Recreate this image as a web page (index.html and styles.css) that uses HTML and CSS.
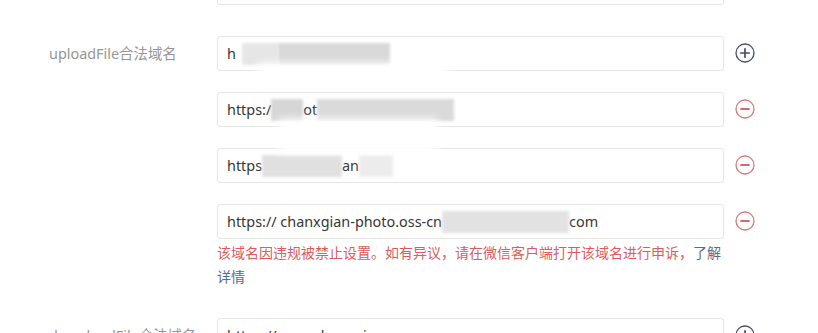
FILE: index.html
```html
<!DOCTYPE html>
<html lang="zh-CN">
<head>
<meta charset="utf-8">
<title>服务器域名</title>
<link rel="stylesheet" href="styles.css">
</head>
<body>
<div class="form">
  <div class="field field-top">
    <div class="label"></div>
    <div class="entries">
      <div class="entry"><div class="box"></div><span class="icon-gap"></span></div>
    </div>
  </div>

  <div class="field field-upload">
    <div class="label">uploadFile合法域名</div>
    <div class="entries">
      <div class="entry">
        <div class="box"><span>h</span><span class="blob b1a"></span><span class="blob b1b"></span><span class="smudge s1"></span></div>
        <svg class="icon" viewBox="0 0 20 20"><circle cx="10" cy="10" r="9" fill="none" stroke="#474d6c" stroke-width="1.3"/><path d="M10 5.8v8.4M5.8 10h8.4" stroke="#474d6c" stroke-width="1.7" stroke-linecap="round"/></svg>
      </div>
      <div class="entry">
        <div class="box"><span>https:/</span><span class="blob b2a"></span><span>ot</span><span class="blob b2b"></span></div>
        <svg class="icon" viewBox="0 0 20 20"><circle cx="10" cy="10" r="9" fill="none" stroke="#d77a7d" stroke-width="1.3"/><path d="M6.2 10h7.6" stroke="#d2666a" stroke-width="2.2" stroke-linecap="round"/></svg>
      </div>
      <div class="entry">
        <div class="box"><span>https</span><span class="blob b3a"></span><span>an</span><span class="blob b3b"></span><span class="smudge s3"></span></div>
        <svg class="icon" viewBox="0 0 20 20"><circle cx="10" cy="10" r="9" fill="none" stroke="#d77a7d" stroke-width="1.3"/><path d="M6.2 10h7.6" stroke="#d2666a" stroke-width="2.2" stroke-linecap="round"/></svg>
      </div>
      <div class="entry-group">
        <div class="entry">
          <div class="box"><span>https:// chanxgian-photo.oss-cn</span><span class="blob b4a"></span><span>com</span></div>
          <svg class="icon" viewBox="0 0 20 20"><circle cx="10" cy="10" r="9" fill="none" stroke="#d77a7d" stroke-width="1.3"/><path d="M6.2 10h7.6" stroke="#d2666a" stroke-width="2.2" stroke-linecap="round"/></svg>
        </div>
        <p class="error">该域名因违规被禁止设置。如有异议，请在微信客户端打开该域名进行申诉，<a class="link">了解详情</a></p>
      </div>
    </div>
  </div>

  <div class="field field-download">
    <div class="label">downloadFile合法域名</div>
    <div class="entries">
      <div class="entry">
        <div class="box"><span>https://www.chanxgian.cn</span></div>
        <svg class="icon" viewBox="0 0 20 20"><circle cx="10" cy="10" r="9" fill="none" stroke="#474d6c" stroke-width="1.3"/><path d="M10 5.8v8.4M5.8 10h8.4" stroke="#474d6c" stroke-width="1.7" stroke-linecap="round"/></svg>
      </div>
    </div>
  </div>
</div>
</body>
</html>
```

FILE: styles.css
```css
html, body {
  margin: 0;
  background: #ffffff;
  overflow: hidden;
}
body {
  font-family: "Noto Sans", "Noto Sans CJK SC", sans-serif;
  font-size: 14.4px;
  color: #353535;
}
.form {
  padding-left: 49px;
}
.field {
  display: flex;
  align-items: flex-start;
}
.label {
  width: 168px;
  flex: none;
  line-height: 35px;
  color: #969696;
  white-space: nowrap;
}
.entries {
  display: flex;
  flex-direction: column;
  gap: 21px;
}
.entry {
  display: flex;
  align-items: center;
}
.box {
  position: relative;
  width: 507px;
  height: 35px;
  box-sizing: border-box;
  border: 1px solid #e6e6e6;
  border-radius: 3px;
  padding-left: 9px;
  display: flex;
  align-items: center;
  white-space: nowrap;
  overflow: visible;
  color: #363636;
}
.icon, .icon-gap {
  width: 20px;
  height: 20px;
  margin-left: 11px;
  margin-top: -2px;
  flex: none;
}
.field-top {
  margin-top: -30px;
}
.field-upload {
  margin-top: 31px;
}
.field-download {
  margin-top: 29px;
}
.error {
  margin: 2px 0 0;
  width: 509px;
  font-size: 14px;
  line-height: 24px;
  color: #dc5b5e;
}
.link {
  color: #576b95;
}
.blob {
  display: inline-block;
  height: 22px;
  background: #dcdcdc;
  filter: blur(1.5px);
}
.b1a { width: 36px; margin-left: 6px; background: #e6e6e6; }
.b1b { width: 112px; background: #d8d8d8; }
.b2a { width: 32px; background: #d6d6d6; }
.b2b { width: 137px; background: #dadada; }
.b3a { width: 80px; background: #e0e0e0; }
.b3b { width: 34px; background: #ececec; }
.b4a { width: 127px; background: #e2e2e2; }
.smudge {
  position: absolute;
  background: #ffffff;
  filter: blur(4px);
}
.s1 { left: 40px; top: 26px; width: 190px; height: 24px; }
.s3 { left: 60px; top: -30px; width: 160px; height: 34px; }
```
